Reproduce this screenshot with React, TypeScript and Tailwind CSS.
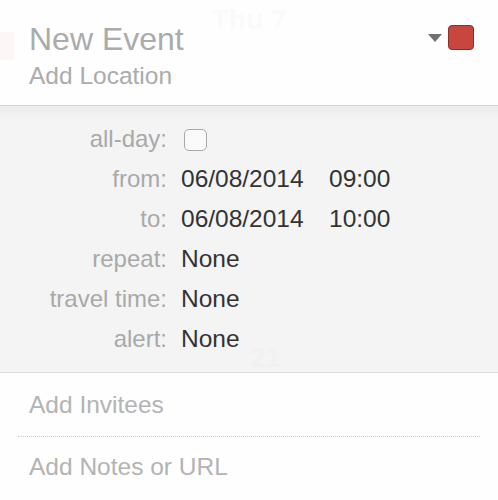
import React from "react";

const font = { fontFamily: '"Liberation Sans", Arial, sans-serif' };

function Row({ label, children }: { label: string; children: React.ReactNode }) {
  return (
    <div className="flex h-[40px] items-start">
      <div className="w-[167px] shrink-0 text-right text-[24px] leading-[40px] text-[#a9a9a9]">{label}</div>
      <div className="ml-[14px] flex text-[24.5px] leading-[40px] text-[#333333]">{children}</div>
    </div>
  );
}

export default function App() {
  return (
    <div className="relative h-[500px] w-[498px] overflow-hidden bg-white" style={font}>
      {/* header */}
      <div className="relative h-[105px] bg-[#fefefe] pl-[29px] pt-[21px]">
        <div className="pointer-events-none absolute left-[212px] top-[4px] text-[28px] font-bold leading-[32px] text-[#fafafa]">Thu 7</div>
        <div className="pointer-events-none absolute left-0 top-[32px] h-[28px] w-[14px] bg-[#fdf6f6]" />
        <div className="relative text-[32px] leading-[36px] text-[#ababab]">New Event</div>
        <div className="relative mt-[4px] text-[24.5px] leading-[30px] text-[#ababab]">Add Location</div>
        <div className="absolute left-[428px] top-[34px] h-0 w-0 border-x-[7px] border-t-[8px] border-x-transparent border-t-[#707070]" />
        <div className="absolute left-[448px] top-[25px] h-[25px] w-[26px] rounded-[4px] border border-[#8b2f2a] bg-[#c8463d]" />
      </div>
      {/* gray details */}
      <div className="relative h-[267px] border-t border-[#d2d2d2] bg-gradient-to-b from-[#ececec] from-[0px] to-[#f4f4f4] to-[14px] pt-[13px]">
        <div className="pointer-events-none absolute left-[250px] top-[236px] text-[28px] font-bold leading-[32px] text-[#f1f1f1]">21</div>
        <div className="relative">
          <Row label="all-day:">
            <div className="mt-[10px] ml-[3px] h-[22px] w-[23px] rounded-[5px] border border-[#a8a8a8] bg-[#fafafa]" />
          </Row>
          <Row label="from:">
            <span className="w-[148px]">06/08/2014</span>
            <span>09:00</span>
          </Row>
          <Row label="to:">
            <span className="w-[148px]">06/08/2014</span>
            <span>10:00</span>
          </Row>
          <Row label="repeat:">None</Row>
          <Row label="travel time:">None</Row>
          <Row label="alert:">None</Row>
        </div>
      </div>
      {/* bottom */}
      <div className="border-t border-[#dcdcdc] bg-[#fefefe]">
        <div className="h-[63px] pl-[29px] pt-[17px] text-[24.5px] leading-[30px] text-[#b3b3b3]">Add Invitees</div>
        <div className="mx-[18px] border-t border-dotted border-[#cfcfcf]" />
        <div className="h-[64px] pl-[29px] pt-[15px] text-[24.5px] leading-[30px] text-[#b3b3b3]">Add Notes or URL</div>
      </div>
    </div>
  );
}
